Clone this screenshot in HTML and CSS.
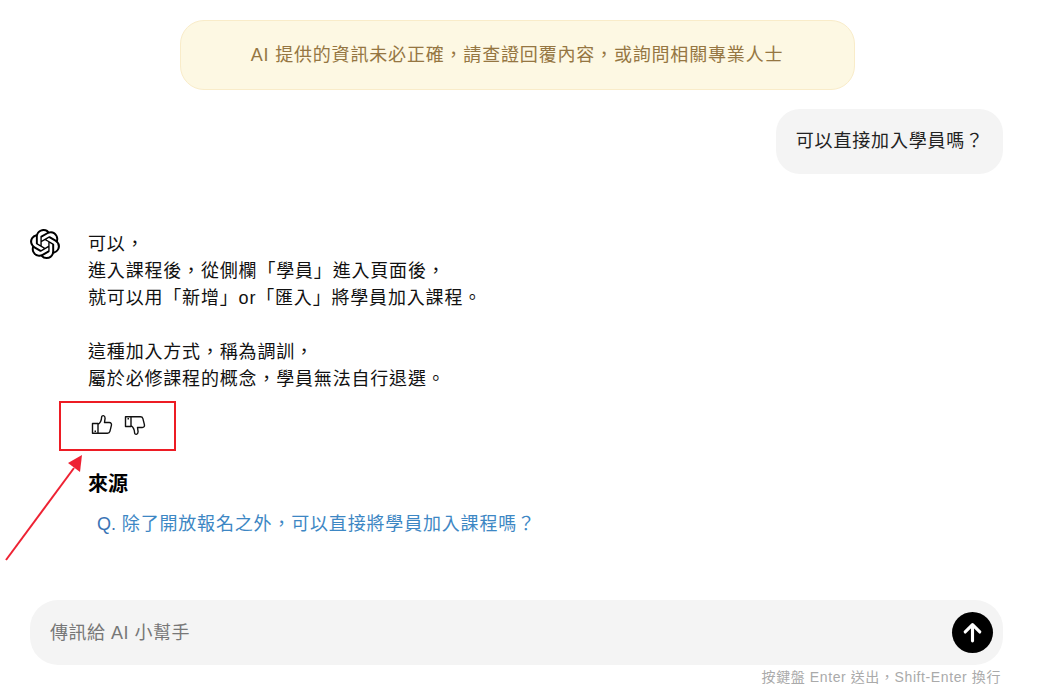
FILE: index.html
```html
<!DOCTYPE html>
<html>
<head>
    <title>AI 小幫手</title>
    <link rel="stylesheet" href="styles.css">
</head>
<body>
    <div class="chat">
        <div class="notice">AI 提供的資訊未必正確&#xFF0C;請查證回覆內容&#xFF0C;或詢問相關專業人士</div>

        <div class="user-row">
            <div class="user-bubble">可以直接加入學員嗎&#xFF1F;</div>
        </div>

        <div class="answer">
            <svg class="logo" viewBox="0 0 24 24"><path d="M22.282 9.821a5.985 5.985 0 0 0-.516-4.91 6.046 6.046 0 0 0-6.51-2.9A6.065 6.065 0 0 0 4.981 4.18a5.985 5.985 0 0 0-3.998 2.9 6.046 6.046 0 0 0 .743 7.097 5.98 5.98 0 0 0 .51 4.911 6.051 6.051 0 0 0 6.515 2.9A5.985 5.985 0 0 0 13.26 24a6.056 6.056 0 0 0 5.772-4.206 5.99 5.99 0 0 0 3.997-2.9 6.056 6.056 0 0 0-.747-7.073zM13.26 22.43a4.476 4.476 0 0 1-2.876-1.04l.141-.081 4.779-2.758a.795.795 0 0 0 .392-.681v-6.737l2.02 1.168a.071.071 0 0 1 .038.052v5.583a4.504 4.504 0 0 1-4.494 4.494zM3.6 18.304a4.47 4.47 0 0 1-.535-3.014l.142.085 4.783 2.759a.771.771 0 0 0 .78 0l5.843-3.369v2.332a.08.08 0 0 1-.033.062L9.74 19.95a4.5 4.5 0 0 1-6.14-1.646zM2.34 7.896a4.485 4.485 0 0 1 2.366-1.973V11.6a.766.766 0 0 0 .388.676l5.815 3.355-2.02 1.168a.076.076 0 0 1-.071 0l-4.83-2.786A4.504 4.504 0 0 1 2.34 7.872zm16.597 3.855l-5.833-3.387L15.119 7.2a.076.076 0 0 1 .071 0l4.83 2.791a4.494 4.494 0 0 1-.676 8.105v-5.678a.79.79 0 0 0-.407-.667zm2.01-3.023l-.141-.085-4.774-2.782a.776.776 0 0 0-.785 0L9.409 9.23V6.897a.066.066 0 0 1 .028-.061l4.83-2.787a4.5 4.5 0 0 1 6.68 4.66zm-12.64 4.135l-2.02-1.164a.08.08 0 0 1-.038-.057V6.075a4.5 4.5 0 0 1 7.375-3.453l-.142.08L8.704 5.46a.795.795 0 0 0-.393.681zm1.097-2.365l2.602-1.5 2.607 1.5v2.999l-2.597 1.5-2.607-1.5z"/></svg>
            <div class="answer-body">
                <p class="answer-text">可以&#xFF0C;<br>進入課程後&#xFF0C;從側欄「學員」進入頁面後&#xFF0C;<br>就可以用「新增」or「匯入」將學員加入課程。<br><br>這種加入方式&#xFF0C;稱為調訓&#xFF0C;<br>屬於必修課程的概念&#xFF0C;學員無法自行退選。</p>
                <div class="feedback">
                    <svg class="thumb" viewBox="0 0 22 22"><path d="M1.500 9.500H7v9.800H1.500zM7 10.500c2-1.500 3.500-4 3.600-7.300.1-2.200 3.400-2.200 3.500 1l-.6 4.300h4.800c1.700 0 2.500 1.300 2.100 2.900l-1.500 6c-.4 1.500-1.300 1.900-2.500 1.900H7"/><path class="dot" d="M3.500 16.500h1.500V18H3.500z"/></svg>
                    <svg class="thumb thumb-down" viewBox="0 0 22 22"><path d="M1.500 9.500H7v9.800H1.500zM7 10.500c2-1.500 3.500-4 3.600-7.300.1-2.200 3.400-2.200 3.500 1l-.6 4.300h4.800c1.700 0 2.500 1.300 2.100 2.900l-1.500 6c-.4 1.500-1.300 1.900-2.500 1.900H7"/><path class="dot" d="M3.500 16.500h1.500V18H3.500z"/></svg>
                </div>
                <h3 class="source-title">來源</h3>
                <a class="source-link" href="#"><span class="source-q">Q.</span> 除了開放報名之外&#xFF0C;可以直接將學員加入課程嗎&#xFF1F;</a>
            </div>
        </div>

        <div class="composer">
            <div class="input-box">
                <span class="placeholder">傳訊給 AI 小幫手</span>
                <button class="send">
                    <svg viewBox="0 0 24 24"><path d="M12 20V5M5 11.500 12 4.500l7 7"/></svg>
                </button>
            </div>
            <div class="hint">按鍵盤 Enter 送出&#xFF0C;Shift-Enter 換行</div>
        </div>
    </div>

    <!-- annotation drawn on top of the screenshot -->
    <div class="mark-box"></div>
    <svg class="mark-arrow" viewBox="0 0 90 120"><line x1="6" y1="119" x2="74" y2="27"/><polygon points="82,14 68,22 80,31"/></svg>
</body>
</html>
```
FILE: styles.css
```css
* {
    box-sizing: border-box;
}

html, body {
    height: 100%;
}

body {
    margin: 0;
    overflow: hidden;
    background: #fff;
    color: #000;
    font-family: "Liberation Sans", "Noto Sans CJK TC", sans-serif;
    font-size: 18px;
    letter-spacing: 0.82px;
}

.chat {
    display: flex;
    flex-direction: column;
    height: 688px;
    padding: 20px 46px 1px 30px;
}

.notice {
    align-self: center;
    width: 675px;
    height: 70px;
    margin-left: 1px;
    padding-bottom: 4px;
    display: flex;
    align-items: center;
    justify-content: center;
    background: #fdf8e3;
    border: 1px solid #f9ecc9;
    border-radius: 24px;
    color: #957642;
}

.user-row {
    display: flex;
    justify-content: flex-end;
    margin-top: 19px;
}

.user-bubble {
    padding: 20px 19px 20px 20px;
    height: 65px;
    line-height: 25px;
    background: #f4f4f4;
    border-radius: 24px;
    color: #222;
}

.answer {
    display: flex;
    margin-top: 53px;
    flex: 1;
}

.logo {
    width: 30px;
    height: 30px;
    margin: 2px 0 0 0;
    flex-shrink: 0;
}

.answer-body {
    margin-left: 28px;
    padding-top: 4px;
}

.answer-text {
    margin: 0;
    line-height: 27px;
    color: #111;
}

.feedback {
    display: flex;
    gap: 11px;
    margin: 20px 0 0 3px;
    height: 24px;
    align-items: center;
}

.thumb {
    width: 22px;
    height: 22px;
    fill: none;
    stroke: #111;
    stroke-width: 1.4;
    stroke-linejoin: round;
}

.thumb-down {
    transform: scaleY(-1);
}

.thumb .dot {
    fill: #111;
    stroke: none;
}

.source-title {
    margin: 33px 0 0 0;
    font-size: 20px;
    line-height: 28px;
    font-weight: bold;
    letter-spacing: 0;
}

.source-link {
    display: block;
    margin: 13px 0 0 9px;
    line-height: 27px;
    color: #3d87c4;
    text-decoration: none;
}

.source-q {
    color: #3a74b5;
    letter-spacing: 0;
}

.input-box {
    display: flex;
    align-items: center;
    justify-content: space-between;
    height: 65px;
    padding: 0 10px 0 20px;
    background: #f4f4f4;
    border-radius: 28px;
}

.placeholder {
    padding-bottom: 4px;
    color: #777;
    letter-spacing: 0.5px;
}

.send {
    width: 41px;
    height: 41px;
    padding: 8px;
    border: none;
    border-radius: 50%;
    background: #000;
}

.send svg {
    display: block;
    fill: none;
    stroke: #fff;
    stroke-width: 3;
    stroke-linecap: round;
    stroke-linejoin: round;
}

.hint {
    margin-top: 2px;
    padding-right: 2px;
    text-align: right;
    font-size: 14px;
    line-height: 20px;
    color: #aaa;
    letter-spacing: 0.6px;
}

.mark-box {
    position: absolute;
    left: 59px;
    top: 401px;
    width: 117px;
    height: 50px;
    border: 2px solid #ed1c24;
}

.mark-arrow {
    position: absolute;
    left: 0;
    top: 441px;
    width: 90px;
    height: 120px;
}

.mark-arrow line {
    stroke: #ee2233;
    stroke-width: 2;
}

.mark-arrow polygon {
    fill: #ee2233;
}
```
